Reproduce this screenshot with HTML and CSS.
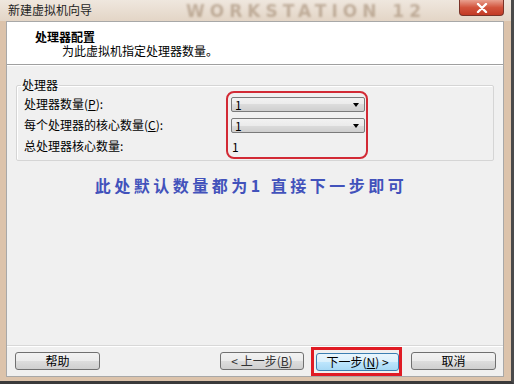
FILE: index.html
```html
<!DOCTYPE html>
<html lang="zh-CN">

<head>
    <meta charset="UTF-8">
    <meta name="viewport" content="width=device-width, initial-scale=1.0">
    <title>新建虚拟机向导</title>
    <link rel="stylesheet" href="styles.css">
</head>

<body>
    <div class="window">
        <div class="titlebar">
            <span class="title-text">新建虚拟机向导</span>
            <span class="watermark">WORKSTATION 12</span>
            <div class="close-btn">
                <svg width="12" height="10" viewBox="0 0 12 10">
                    <path d="M2 1 L10 9 M10 1 L2 9" stroke="#fff" stroke-width="2.4" stroke-linecap="round" />
                </svg>
            </div>
        </div>
        <div class="client">
            <div class="header">
                <div class="header-title">处理器配置</div>
                <div class="header-sub">为此虚拟机指定处理器数量。</div>
            </div>
            <div class="content">
                <fieldset class="group">
                    <legend>处理器</legend>
                    <div class="group-body">
                        <div class="labels">
                            <div class="row">处理器数量(<u>P</u>):</div>
                            <div class="row">每个处理器的核心数量(<u>C</u>):</div>
                            <div class="row last">总处理器核心数量:</div>
                        </div>
                        <div class="mark">
                            <div class="row">
                                <div class="combo"><span>1</span><span class="arrow"></span></div>
                            </div>
                            <div class="row">
                                <div class="combo"><span>1</span><span class="arrow"></span></div>
                            </div>
                            <div class="row last"><span class="total">1</span></div>
                        </div>
                    </div>
                </fieldset>

                <div class="note">此处默认数量都为1 直接下一步即可</div>

                <div class="spacer"></div>

                <div class="buttons">
                    <div class="btn">帮助</div>
                    <div class="btn back">&lt; 上一步(<u>B</u>)</div>
                    <div class="next-mark">
                        <div class="btn next">下一步(<u>N</u>) &gt;</div>
                    </div>
                    <div class="btn">取消</div>
                </div>
            </div>
        </div>
    </div>
</body>

</html>
```

FILE: styles.css
```css
body {
    margin: 0px;
    padding: 0px;
    font-family: "Noto Sans CJK SC", "DejaVu Sans", sans-serif;
    font-size: 12px;
    color: #000;
}

.window {
    width: 514px;
    height: 384px;
    box-sizing: border-box;
    background-color: #dcc3ab;
    border-right: 3px solid #4a4a4a;
    border-bottom: 3px solid #3a3a3a;
    display: flex;
    flex-direction: column;
}

.titlebar {
    position: relative;
    height: 21px;
    display: flex;
    justify-content: space-between;
    align-items: flex-start;
    background: linear-gradient(#efe7de, #e3d5c6);
    overflow: hidden;
}

.title-text {
    margin: 3px 0 0 8px;
    line-height: 14px;
    color: #1e1e1e;
}

/* faded product name behind the title bar */
.watermark {
    position: absolute;
    left: 186px;
    top: 2px;
    line-height: 18px;
    font-family: "DejaVu Sans", sans-serif;
    font-weight: bold;
    font-size: 17px;
    letter-spacing: 5px;
    color: rgba(130, 100, 70, 0.4);
    filter: blur(1px);
}

.close-btn {
    position: relative;
    width: 45px;
    height: 16px;
    margin-right: 7px;
    box-sizing: border-box;
    border: 1px solid #7a3328;
    border-top: none;
    border-radius: 0 0 4px 4px;
    background: linear-gradient(#e9a08f, #d2543d 50%, #c23a25);
    display: flex;
    justify-content: center;
    align-items: center;
}

.client {
    flex: 1;
    margin: 0 7px 4px 6px;
    border: 1px solid #a8a8a8;
    display: flex;
    flex-direction: column;
    background-color: #f0f0f0;
}

.header {
    height: 43px;
    box-sizing: border-box;
    padding: 8px 0 0 28px;
    background-color: #fff;
    border-bottom: 1px solid #a0a0a0;
    box-shadow: 0 1px #fff;
}

.header-title {
    font-weight: bold;
    line-height: 14px;
}

.header-sub {
    margin-left: 27px;
    line-height: 14px;
}

.content {
    flex: 1;
    display: flex;
    flex-direction: column;
}

.group {
    margin: 14px 9px 0 9px;
    padding: 0 0 1px 7px;
    border: 1px solid #d5d5d5;
    box-shadow: inset 1px 1px #fff;
    border-radius: 2px;
}

.group legend {
    padding: 0 1px;
    margin-left: -3px;
    line-height: 12px;
}

.group-body {
    display: flex;
}

.labels {
    width: 202px;
    padding-top: 2px;
}

.row {
    height: 21px;
    display: flex;
    align-items: center;
}

.mark {
    width: 142px;
    box-sizing: border-box;
    border: 2px solid #d22a35;
    border-radius: 8px;
    padding: 1px 1px 0 3px;
}

.combo {
    width: 100%;
    height: 15px;
    box-sizing: border-box;
    border: 1px solid #7a7a7a;
    border-radius: 2px;
    background: linear-gradient(#f2f2f2, #ebebeb 50%, #dcdcdc 50%, #cfcfcf);
    display: flex;
    justify-content: space-between;
    align-items: center;
    padding: 0 5px 0 3px;
    line-height: 12px;
}

.arrow {
    width: 0;
    height: 0;
    border-left: 3.5px solid transparent;
    border-right: 3.5px solid transparent;
    border-top: 4px solid #000;
}

.total {
    padding-left: 1px;
}

.note {
    margin-top: 13px;
    padding-right: 8px;
    text-align: center;
    font-weight: bold;
    font-size: 16px;
    letter-spacing: 3.5px;
    line-height: 22px;
    color: #4252bb;
}

.spacer {
    flex: 1;
}

.buttons {
    height: 30px;
    border-top: 1px solid #d8d8d8;
    box-shadow: inset 0 1px #fff;
    display: flex;
    align-items: center;
    padding: 0 7px 0 8px;
}

.btn {
    width: 85px;
    height: 18px;
    box-sizing: border-box;
    border: 1px solid #707070;
    border-radius: 3px;
    background: linear-gradient(#f2f2f2, #ebebeb 50%, #dddddd 50%, #cfcfcf);
    text-align: center;
    line-height: 15px;
}

.back {
    width: 84px;
    margin-left: auto;
    color: #333;
}

.next-mark {
    margin: 0 9px 0 7px;
    border: 3px solid #e01b24;
    padding: 3px 0 2px 2px;
}

.next {
    width: 83px;
    border-color: #3c7fb1;
    background: linear-gradient(#eaf6fd, #d9f0fc 50%, #bee6fd 50%, #a7d9f5);
}
```
